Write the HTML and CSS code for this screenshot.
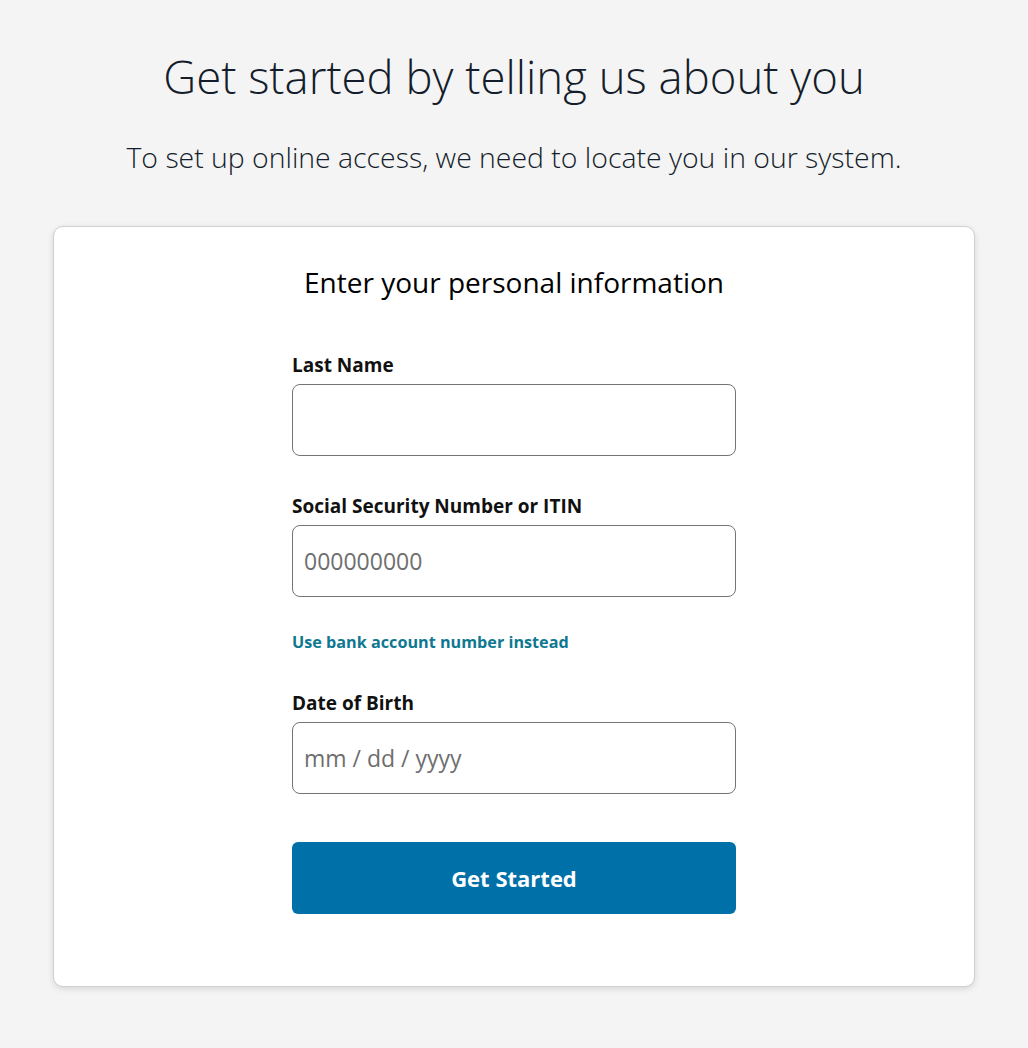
FILE: index.html
```html
<!DOCTYPE html>
<html lang="en">
<head>
  <meta charset="UTF-8" />
  <meta name="viewport" content="width=device-width, initial-scale=1.0"/>
  <title>Get Started</title>
  <link rel="stylesheet" href="styles.css">
</head>
<body>

<div class="page">
  <h1>Get started by telling us about you</h1>
  <p class="intro">To set up online access, we need to locate you in our system.</p>

  <div class="card">
    <h2>Enter your personal information</h2>

    <form class="form">
      <!-- Last name -->
      <div class="field">
        <label for="lastName">Last Name</label>
        <input type="text" id="lastName">
      </div>

      <!-- SSN / ITIN -->
      <div class="field">
        <label for="ssn">Social Security Number or ITIN</label>
        <input type="text" id="ssn" placeholder="000000000">
      </div>

      <a class="alt-link" href="#">Use bank account number instead</a>

      <!-- Date of birth -->
      <div class="field">
        <label for="dob">Date of Birth</label>
        <input type="text" id="dob" placeholder="mm / dd / yyyy">
      </div>

      <button type="button" class="start-btn">Get Started</button>
    </form>
  </div>
</div>

</body>
</html>
```

FILE: styles.css
```css
body {
  margin: 0;
  background-color: #f4f4f4;
  font-family: "Open Sans", "Noto Sans", Arial, sans-serif;
  color: #141d2b;
}

.page {
  max-width: 922px;
  margin: 0 auto;
  padding-top: 46px;
  padding-bottom: 62px;
}

h1 {
  margin: 0;
  font-size: 45.5px;
  font-weight: 300;
  line-height: 60px;
  text-align: center;
}

.intro {
  margin: 32px 0 0;
  font-size: 28.4px;
  font-weight: 300;
  line-height: 38px;
  text-align: center;
}

.card {
  margin-top: 50px;
  background: white;
  border: 1px solid #d0d0d0;
  border-radius: 10px;
  box-shadow: 0 2px 6px rgba(0, 0, 0, 0.12);
  padding: 38px 0 72px;
}

h2 {
  margin: 0;
  font-size: 28px;
  font-weight: 400;
  line-height: 34px;
  text-align: center;
  color: #000;
}

.form {
  width: 444px;
  margin: 53px auto 0;
  display: flex;
  flex-direction: column;
}

.field {
  display: flex;
  flex-direction: column;
  margin-bottom: 37px;
}

label {
  font-size: 19px;
  font-weight: 700;
  line-height: 26px;
  margin-bottom: 6px;
  color: #111;
}

input {
  box-sizing: border-box;
  height: 72px;
  padding: 0 11px;
  border: 1px solid #747474;
  border-radius: 8px;
  font-family: inherit;
  font-size: 23px;
  color: #222;
  background: white;
}

input::placeholder {
  color: #6e6e6e;
}

.alt-link {
  font-size: 16.2px;
  font-weight: 700;
  line-height: 24px;
  color: #0f7891;
  text-decoration: none;
  margin-top: -4px;
  margin-bottom: 36px;
}

.start-btn {
  height: 72px;
  margin-top: 11px;
  border: none;
  border-radius: 6px;
  background-color: #0070a8;
  color: white;
  font-family: inherit;
  font-size: 22px;
  font-weight: 700;
  cursor: pointer;
}
```
